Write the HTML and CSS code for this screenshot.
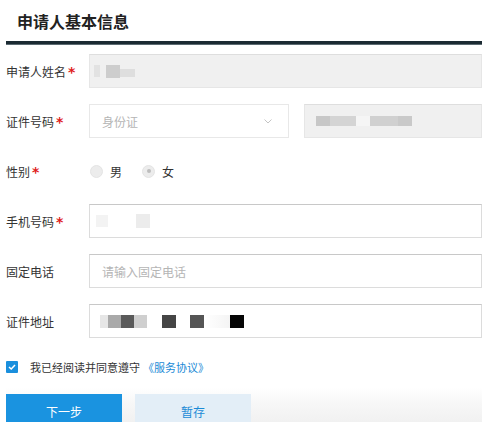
FILE: index.html
```html
<!DOCTYPE html>
<html lang="zh-CN">
<head>
<meta charset="utf-8">
<title>申请人基本信息</title>
<link rel="stylesheet" href="styles.css">
</head>
<body>
<div class="page">
  <h2 class="title">申请人基本信息</h2>
  <form class="form">
    <div class="row">
      <label class="label">申请人姓名<span class="req">*</span></label>
      <div class="field field-disabled">
        <span class="blur b-name1"></span><span class="blur b-name2"></span><span class="blur b-name3"></span>
      </div>
    </div>
    <div class="row">
      <label class="label">证件号码<span class="req">*</span></label>
      <div class="select">
        <span class="ph">身份证</span>
        <svg class="arrow" width="8" height="5" viewBox="0 0 8 5"><path d="M0.5 0.5 L4 4 L7.5 0.5" fill="none" stroke="#c4c4c4" stroke-width="1"/></svg>
      </div>
      <div class="field field-disabled idno">
        <span class="blur b-id1"></span><span class="blur b-id2"></span><span class="blur b-id3"></span><span class="blur b-id4"></span><span class="blur b-id5"></span>
      </div>
    </div>
    <div class="row">
      <label class="label">性别<span class="req">*</span></label>
      <div class="radios">
        <span class="radio-item"><span class="radio"></span>男</span>
        <span class="radio-item"><span class="radio checked"></span>女</span>
      </div>
    </div>
    <div class="row">
      <label class="label">手机号码<span class="req">*</span></label>
      <div class="field">
        <span class="blur b-ph1"></span><span class="blur b-ph2"></span><span class="blur b-ph3"></span>
      </div>
    </div>
    <div class="row">
      <label class="label">固定电话</label>
      <div class="field"><span class="ph">请输入固定电话</span></div>
    </div>
    <div class="row">
      <label class="label">证件地址</label>
      <div class="field addr">
        <span class="blur a1"></span><span class="blur a2"></span><span class="blur a3"></span><span class="blur a4"></span><span class="gap g1"></span><span class="blur a5"></span><span class="gap g2"></span><span class="blur a6"></span><span class="gap g3"></span><span class="blur a7"></span>
      </div>
    </div>
    <div class="agree">
      <span class="check">
        <svg width="8" height="6" viewBox="0 0 8 6"><path d="M1 3 L3.2 5 L7 1" fill="none" stroke="#fff" stroke-width="1.5"/></svg>
      </span>
      <span class="agree-text">我已经阅读并同意遵守</span>
      <a class="link">《服务协议》</a>
    </div>
    <div class="actions">
      <button type="button" class="btn btn-primary">下一步</button>
      <button type="button" class="btn btn-secondary">暂存</button>
    </div>
  </form>
</div>
</body>
</html>
```

FILE: styles.css
```css
* { box-sizing: border-box; }
html, body { margin: 0; padding: 0; background: #fff; }
body {
  font-family: "Noto Sans CJK SC", "Noto Sans", sans-serif;
  color: #333;
  font-size: 12px;
}
.page {
  width: 482px;
  padding-left: 6px;
  overflow: hidden;
  height: 422px;
}
.title {
  margin: 0;
  padding: 10px 0 0 11px;
  height: 44px;
  font-size: 16px;
  line-height: 22px;
  font-weight: bold;
  color: #222;
  border-bottom: 3px solid #1b2a32;
  box-shadow: 0 1px 0 #5c6b72;
}
.form { padding-top: 10px; }
.row {
  display: flex;
  align-items: center;
  height: 34px;
  margin-bottom: 16px;
}
.label {
  width: 83px;
  flex: none;
  font-size: 12px;
  color: #333;
  white-space: nowrap;
  display: flex;
  align-items: center;
}
.req {
  color: #e02020;
  margin-left: 2px;
  font-family: "DejaVu Sans", sans-serif;
  font-weight: bold;
  font-size: 14px;
  line-height: 12px;
  height: 12px;
  position: relative;
  top: 1px;
}
.field {
  flex: 1;
  height: 34px;
  border: 1px solid #dcdcdc;
  border-top-color: #c8c8c8;
  background: #fff;
  display: flex;
  align-items: center;
  padding-left: 12px;
  position: relative;
}
.field-disabled {
  background: #f0f0f0;
  border-color: #e6e6e6;
  border-top-color: #dedede;
}
.ph { color: #b5b5b5; font-size: 12px; }
.select {
  width: 200px;
  flex: none;
  height: 34px;
  border: 1px solid #e8e8e8;
  display: flex;
  align-items: center;
  justify-content: space-between;
  padding: 0 16px 0 12px;
  margin-right: 15px;
}
.arrow { display: block; }
.idno { padding-left: 11px; }
.blur { display: inline-block; height: 12px; flex: none; }
.b-name1 { width: 6px; background: #e2e2e2; margin-left: -8px; margin-right: 6px; }
.b-name2 { width: 14px; background: #cdcdcd; height: 13px; }
.b-name3 { width: 15px; background: #dedede; height: 8px; margin-top: 3px; }
.b-id1 { width: 14px; background: #c7c7c7; height: 10px; }
.b-id2 { width: 26px; background: #d4d4d4; height: 10px; }
.b-id3 { width: 14px; background: #f5f5f5; height: 10px; margin-right: 0; }
.b-id4 { width: 28px; background: #d0d0d0; height: 10px; }
.b-id5 { width: 14px; background: #c9c9c9; height: 10px; }
.b-ph1 { width: 12px; background: #f3f3f3; margin-left: -6px; }
.b-ph2 { width: 28px; background: #fff; }
.b-ph3 { width: 14px; background: #ececec; height: 14px; }
.addr { padding-left: 10px; }
.addr .blur { height: 13px; }
.a1 { width: 8px; background: #e6e6e6; }
.a2 { width: 13px; background: #a9a9a9; }
.a3 { width: 13px; background: #5a5a5a; }
.a4 { width: 13px; background: #cfcfcf; }
.gap { display: inline-block; flex: none; }
.g1 { width: 15px; }
.a5 { width: 14px; background: #454545; }
.g2 { width: 14px; }
.a6 { width: 14px; background: #555; }
.g3 { width: 26px; background: linear-gradient(90deg, #fff, #f4f4f4); height: 13px; }
.a7 { width: 14px; background: #050505; }
.radios { display: flex; align-items: center; padding-left: 1px; }
.radio-item { display: inline-flex; align-items: center; font-size: 12px; color: #333; margin-right: 20px; }
.radio {
  width: 13px; height: 13px;
  border-radius: 50%;
  background: #ececec;
  border: 1px solid #e4e4e4;
  margin-right: 7px;
  position: relative;
}
.radio.checked::after {
  content: "";
  position: absolute;
  left: 3.5px; top: 3.5px;
  width: 4px; height: 4px;
  border-radius: 50%;
  background: #bdbdbd;
}
.agree {
  display: flex;
  align-items: center;
  margin-top: 19px;
  height: 20px;
}
.check {
  width: 12px; height: 12px;
  background: #1a8fdd;
  border-radius: 1px;
  display: inline-flex;
  align-items: center;
  justify-content: center;
  margin-right: 12px;
}
.check svg { display: block; }
.agree-text { color: #333; font-size: 11px; }
.link { color: #1a8ad6; font-size: 11px; margin-left: 3px; }
.actions {
  display: flex;
  margin-top: 11px;
  padding-top: 6px;
  background: linear-gradient(180deg, #fff 0%, #f7f7f7 40%, #efefef 100%);
  height: 40px;
}
.btn {
  height: 34px;
  width: 116px;
  border: 0;
  font-family: inherit;
  font-size: 12px;
  padding: 0;
  cursor: pointer;
}
.btn-primary { background: #1a93e0; color: #fff; }
.btn-secondary { background: #e3eef7; color: #1a8ad6; margin-left: 13px; }
```
